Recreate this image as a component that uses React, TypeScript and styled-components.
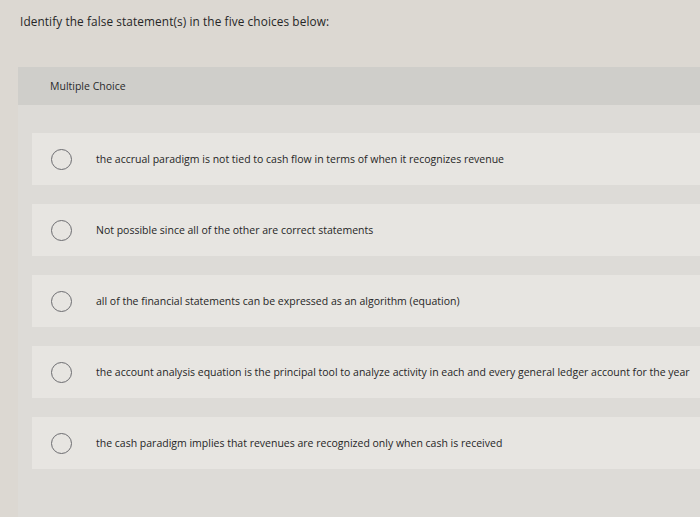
import React from "react";
import styled, { createGlobalStyle } from "styled-components";

const Global = createGlobalStyle`
  html, body { margin: 0; padding: 0; }
  body {
    background: #dcd8d2;
    font-family: "Open Sans", "Liberation Sans", sans-serif;
    color: #2f2f2f;
    width: 700px;
    height: 517px;
    overflow: hidden;
  }
`;

const Page = styled.div`
  display: flex;
  flex-direction: column;
  padding: 13px 0 0 20px;
  height: 517px;
  box-sizing: border-box;
`;

const Question = styled.div`
  font-size: 11.8px;
  line-height: 16px;
  color: #262626;
  letter-spacing: 0.1px;
`;

const Panel = styled.div`
  margin: 38px 0 0 -2px;
  display: flex;
  flex-direction: column;
  flex: 1;
  background: #dddbd7;
`;

const Header = styled.div`
  height: 38px;
  display: flex;
  align-items: center;
  padding-left: 32px;
  background: #cfceca;
  font-size: 10.5px;
  color: #2a2a2a;
`;

const Choices = styled.div`
  display: flex;
  flex-direction: column;
  gap: 19px;
  padding: 28px 0 0 14px;
`;

const Choice = styled.div`
  height: 52px;
  display: flex;
  align-items: center;
  gap: 24px;
  padding-left: 19px;
  background: #e7e5e1;
`;

const Radio = styled.span`
  width: 21px;
  height: 21px;
  border-radius: 50%;
  border: 1.5px solid #6c6c70;
  box-sizing: border-box;
  flex: none;
`;

const Label = styled.span`
  font-size: 10.5px;
  font-weight: 500;
  color: #262626;
  white-space: nowrap;
`;

const options = [
  "the accrual paradigm is not tied to cash flow in terms of when it recognizes revenue",
  "Not possible since all of the other are correct statements",
  "all of the financial statements can be expressed as an algorithm (equation)",
  "the account analysis equation is the principal tool to analyze activity in each and every general ledger account for the year",
  "the cash paradigm implies that revenues are recognized only when cash is received",
];

export default function App() {
  return (
    <>
      <Global />
      <Page>
        <Question>Identify the false statement(s) in the five choices below:</Question>
        <Panel>
          <Header>Multiple Choice</Header>
          <Choices>
            {options.map((o) => (
              <Choice key={o}>
                <Radio />
                <Label>{o}</Label>
              </Choice>
            ))}
          </Choices>
        </Panel>
      </Page>
    </>
  );
}
